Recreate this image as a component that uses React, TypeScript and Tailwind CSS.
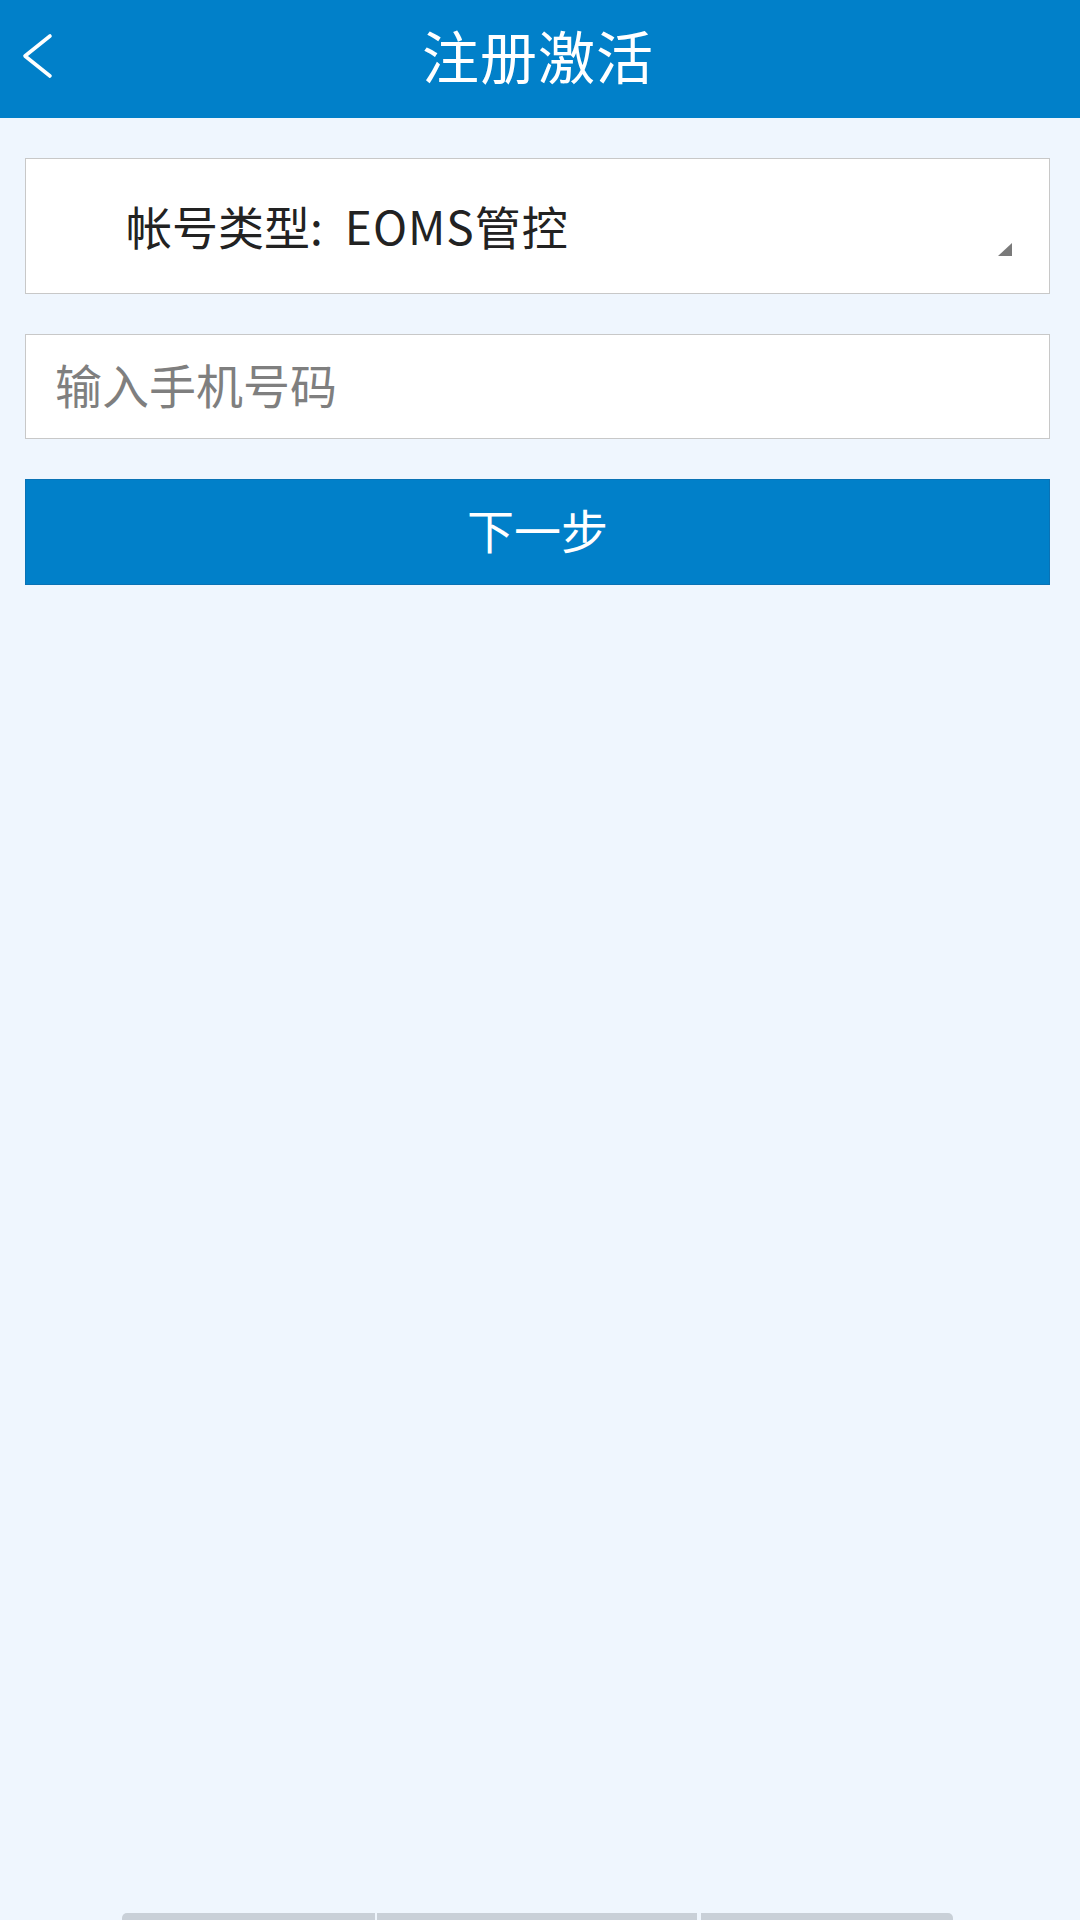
import React from "react";

export default function App() {
  const font = { fontFamily: '"Noto Sans CJK SC", "Noto Sans", sans-serif' };
  return (
    <div
      className="min-h-[1920px] w-[1080px] bg-[#EFF6FE] flex flex-col"
      style={font}
    >
      {/* Header */}
      <div className="h-[118px] bg-[#0180C9] grid grid-cols-[110px_1fr_110px] items-center">
        <button className="h-full flex items-center pl-[22px] pb-[6px]">
          <svg width="34" height="46" viewBox="0 0 34 46" fill="none">
            <polyline
              points="28,3 3,23 28,43"
              stroke="#ffffff"
              strokeWidth="3.6"
              strokeLinecap="round"
              strokeLinejoin="round"
            />
          </svg>
        </button>
        <div className="text-center text-white text-[57px] leading-none tracking-[1px] pr-[4px] pb-[10px]">
          注册激活
        </div>
        <div />
      </div>

      {/* Form */}
      <div className="flex flex-col gap-[40px] ml-[25px] w-[1025px] mt-[40px]">
        <div className="relative h-[136px] bg-white border border-[#C8C8C8] flex items-center pl-[100px] pb-[2px]">
          <span className="text-[46px] leading-none text-[#222222]">
            帐号类型:<span className="ml-[22px] tracking-[1px]">EOMS管控</span>
          </span>
          <svg
            className="absolute right-[37px] bottom-[37px]"
            width="14"
            height="13"
            viewBox="0 0 14 13"
          >
            <polygon points="14,0 14,13 0,13" fill="#7A7A7A" />
          </svg>
        </div>

        <div className="h-[105px] bg-white border border-[#C8C8C8] flex items-center pb-[7px]">
          <input
            className="w-full bg-transparent outline-none pl-[29px] text-[47px] leading-none text-[#222] placeholder:text-[#7F7F7F]"
            style={font}
            placeholder="输入手机号码"
          />
        </div>

        <button className="h-[106px] bg-[#0180C9] border border-[#0A72B5] flex items-center justify-center text-white text-[47px] leading-none pb-[8px]">
          下一步
        </button>
      </div>

      {/* Bottom bars */}
      <div className="mt-auto flex ml-[122px] h-[7px]">
        <div className="w-[253px] h-full bg-[#C9D0D8] rounded-tl-[5px]" />
        <div className="w-[320px] h-full bg-[#C9D0D8] ml-[2px]" />
        <div className="w-[252px] h-full bg-[#C9D0D8] ml-[4px] rounded-tr-[5px]" />
      </div>
    </div>
  );
}
